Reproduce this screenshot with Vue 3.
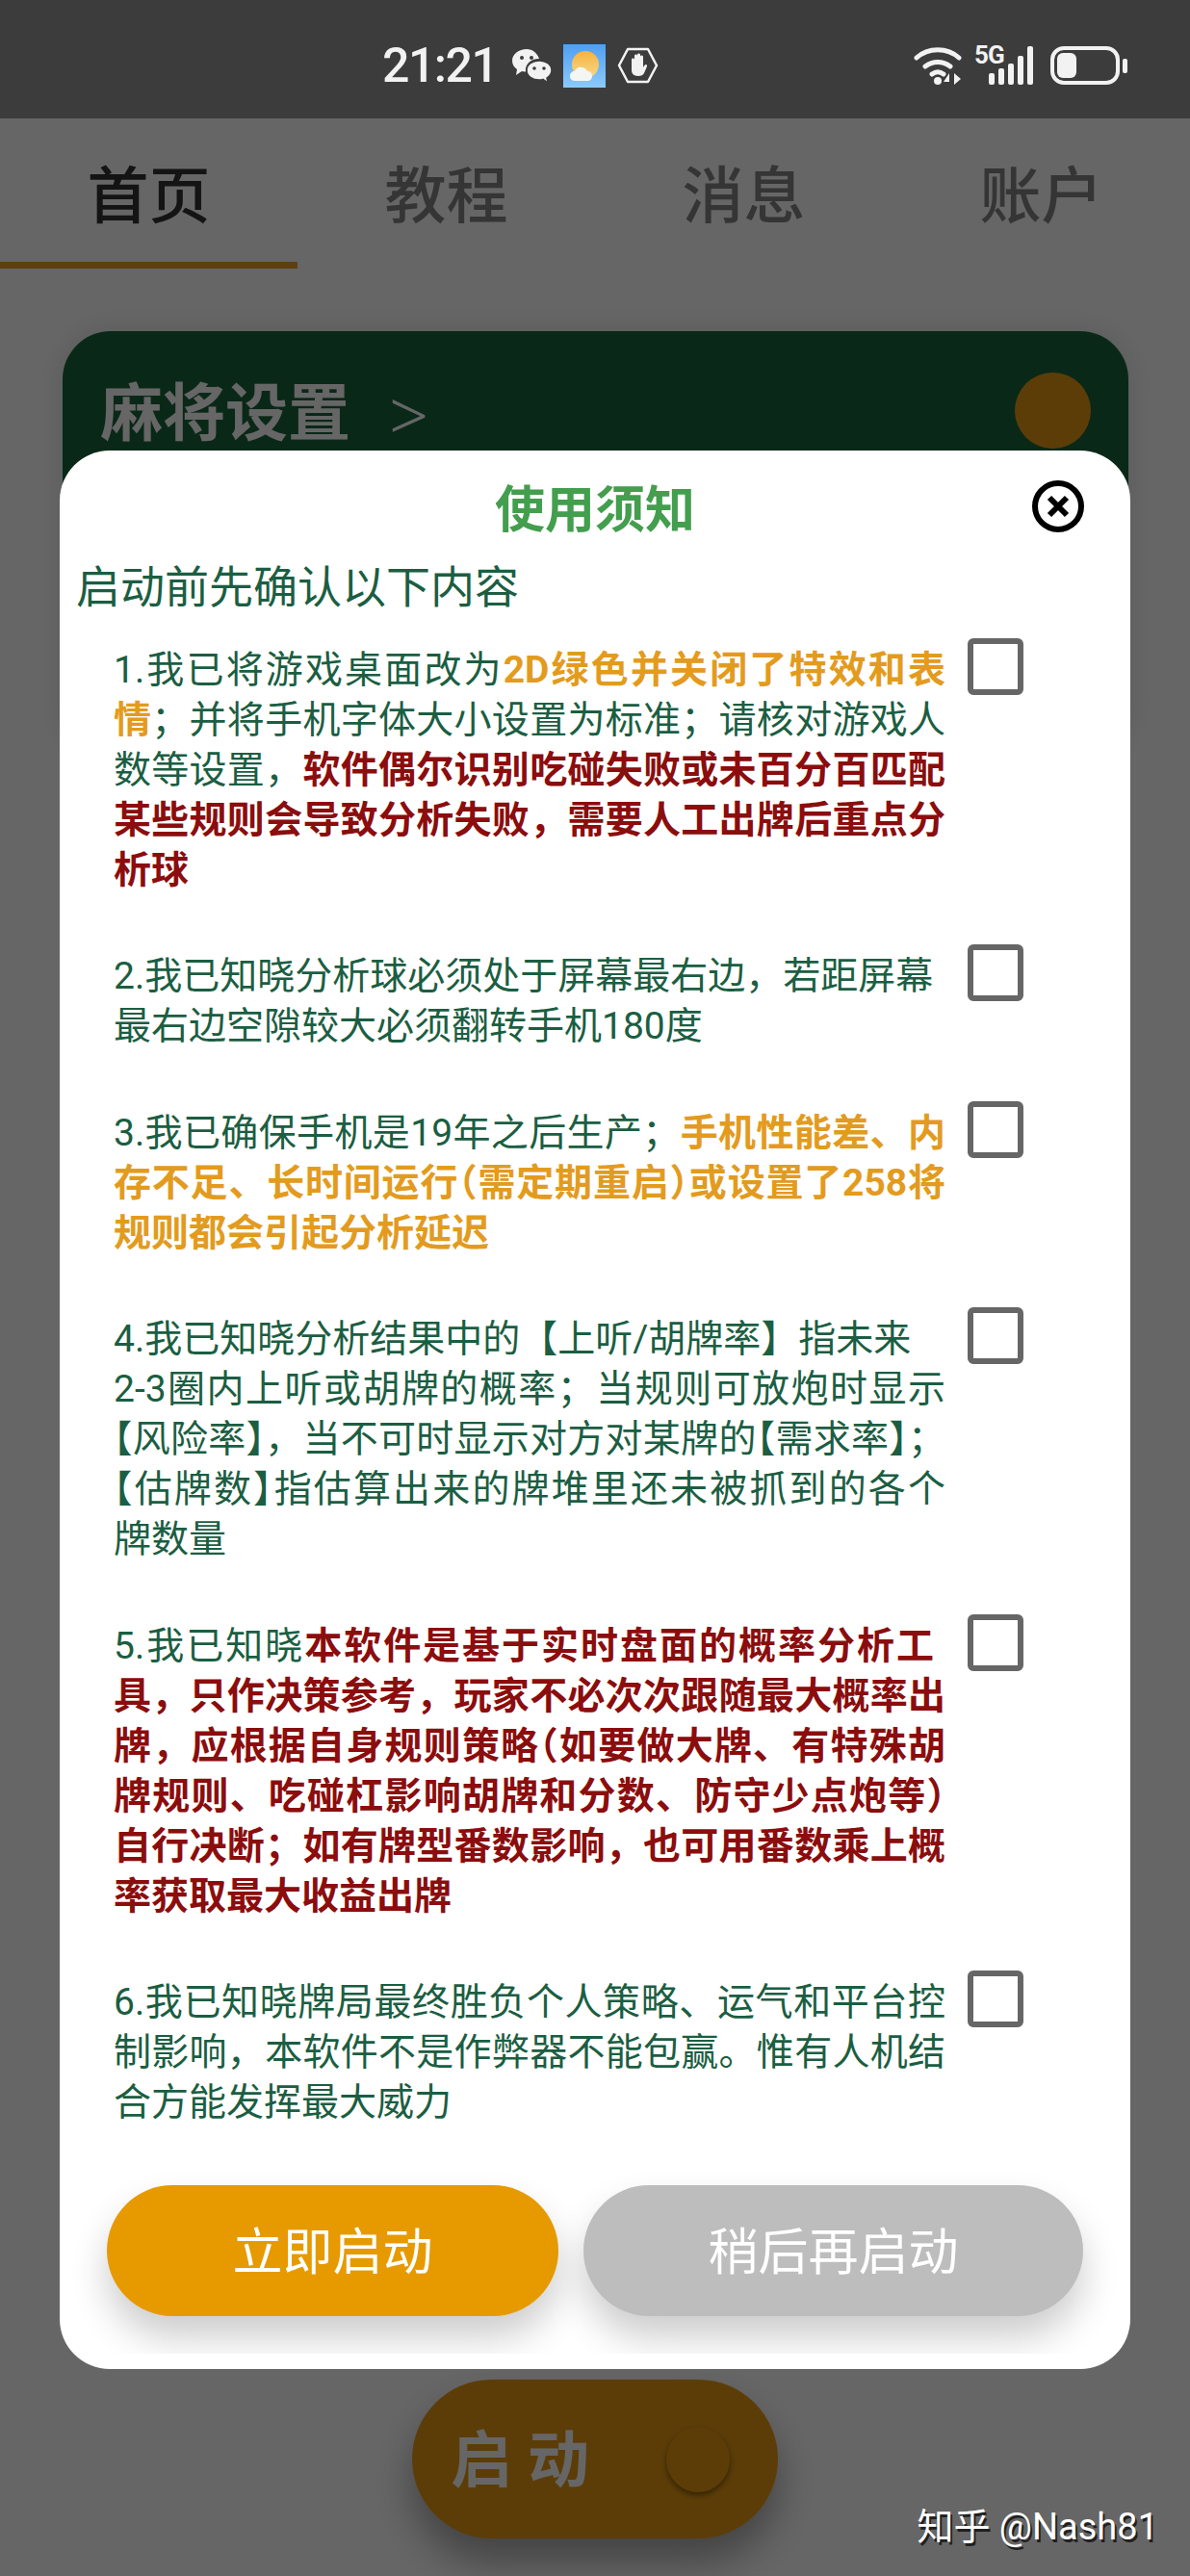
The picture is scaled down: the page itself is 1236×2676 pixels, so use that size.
<template>
  <div class="page">
    <header class="status">
      <span class="clock">21:21</span>
      <svg class="ic-wechat" viewBox="0 0 41 35" width="41" height="35">
        <path d="M15 0C7 0 0 5 0 12c0 4 2 7 5 9l-1 6 6-4c1 .3 3 .5 4 .4C13 16 19 10 28 10 26 4 21 0 15 0z" fill="#f2f2f2"/>
        <circle cx="10" cy="9" r="2" fill="#3c3c3c"/>
        <circle cx="20" cy="9" r="2" fill="#3c3c3c"/>
        <path d="M28 12c-7 0-13 4-13 10s6 10 13 10c1.500 0 3-.2 4-.6l5 3.600-1-5c3-2 5-5 5-8 0-6-6-10-13-10z" fill="#f2f2f2" stroke="#3c3c3c" stroke-width="1.500"/>
        <circle cx="23" cy="20" r="1.800" fill="#3c3c3c"/>
        <circle cx="33" cy="20" r="1.800" fill="#3c3c3c"/>
      </svg>
      <svg class="ic-weather" viewBox="0 0 44 45" width="44" height="45">
        <defs>
          <linearGradient id="sky" x1="0" y1="0" x2="0" y2="1">
            <stop offset="0" stop-color="#4f9ff2"/>
            <stop offset="1" stop-color="#8ccafc"/>
          </linearGradient>
          <linearGradient id="sun" x1="0" y1="0" x2="0" y2="1">
            <stop offset="0" stop-color="#f6b33f"/>
            <stop offset="1" stop-color="#f7d98a"/>
          </linearGradient>
        </defs>
        <rect width="44" height="45" fill="url(#sky)"/>
        <circle cx="23" cy="21" r="14" fill="url(#sun)"/>
        <path d="M13 38c-4 0-6-2-6-5s2-5 5-5c1-3 4-5 7-4 3 0 5 2 6 4 3 0 5 2 5 5s-2 5-5 5z" fill="#f4f6f4"/>
      </svg>
      <svg class="ic-hand" viewBox="0 0 43 38" width="43" height="38">
        <path d="M11 2h21l9 17-9 17H11L2 19z" fill="none" stroke="#f2f2f2" stroke-width="2.500" stroke-linejoin="round"/>
        <path d="M15 20v-7c0-2 3-2 3 0V9c0-2 3-2 3 0V8c0-2 3-2 3 0v2c0-2 3-2 3 0v11c1-2 2-3 3-3s1 1 1 2l-3 7c-1 2-3 3-6 3-5 0-7-3-7-6z" fill="#f2f2f2"/>
      </svg>

      <div class="status-right">
        <svg class="ic-wifi" viewBox="0 0 53 40" width="53" height="40">
          <g fill="none" stroke="#f2f2f2" stroke-width="5" stroke-linecap="round">
            <path d="M3 12C15 1 35 1 47 12"/>
            <path d="M12 21c8-6 18-6 26 0"/>
            <path d="M19 29c4-3 8-3 12 0"/>
          </g>
          <circle cx="25" cy="36" r="4" fill="#f2f2f2"/>
          <path d="M37 40V28l-6 9h6zM42 28v12l7-6z" fill="#f2f2f2"/>
        </svg>
        <div class="signal">
          <span class="five-g">5G</span>
          <i class="bar b1"></i>
          <i class="bar b2"></i>
          <i class="bar b3"></i>
          <i class="bar b4"></i>
          <i class="bar b5"></i>
        </div>
        <div class="battery"><i class="battery-fill"></i></div>
        <i class="battery-nub"></i>
      </div>
    </header>

    <nav class="tabs">
      <div v-for="(tab, i) in tabs" :key="tab" class="tab" :class="{ active: i === 0 }">{{ tab }}</div>
    </nav>

    <main class="home">
      <section class="card">
        <span class="card-title">麻将设置</span>
        <span class="card-arrow">&gt;</span>
        <i class="card-dot"></i>
      </section>
      <div class="start">
        <span class="start-text">启 动</span>
        <i class="start-knob"></i>
      </div>
    </main>

    <div class="overlay">
      <div class="dialog">
        <div class="dialog-head">
          <h2 class="dialog-title">使用须知</h2>
          <svg class="close" viewBox="0 0 54 54" width="54" height="54">
            <circle cx="27" cy="27" r="24" fill="#fff" stroke="#000" stroke-width="6"/>
            <path d="M18 18l18 18M36 18L18 36" stroke="#000" stroke-width="6"/>
          </svg>
        </div>
        <p class="dialog-sub">启动前先确认以下内容</p>

        <ul class="rules">
          <li v-for="(rule, r) in rules" :key="r" class="rule">
            <div class="rule-text">
              <p v-for="(line, l) in rule" :key="l" class="line" :class="{ full: line.full }">
                <span v-for="(part, p) in line.parts" :key="p" :class="[part.tone, { pun: part.pun }]">{{ part.text }}</span>
              </p>
            </div>
            <i class="check"></i>
          </li>
        </ul>

        <div class="actions">
          <button class="btn btn-now">立即启动</button>
          <button class="btn btn-later">稍后再启动</button>
        </div>
      </div>
    </div>

    <span class="watermark">知乎 @Nash81</span>
  </div>
</template>

<script setup>
const tabs = ['首页', '教程', '消息', '账户']

// brackets are set half width on the lines that run the full measure
function makeLine(full, segments) {
  const parts = []
  for (const [text, tone] of segments) {
    if (!full) {
      parts.push({ text, tone })
      continue
    }
    for (const piece of text.split(/([【】（）])/)) {
      if (piece) parts.push({ text: piece, tone, pun: /[【】（）]/.test(piece) })
    }
  }
  return { full, parts }
}

const full = (...segments) => makeLine(true, segments)
const short = (...segments) => makeLine(false, segments)

const rules = [
  [
    full(['1.我已将游戏桌面改为'], ['2D绿色并关闭了特效和表', 'warn']),
    full(['情', 'warn'], ['；并将手机字体大小设置为标准；请核对游戏人']),
    full(['数等设置，'], ['软件偶尔识别吃碰失败或未百分百匹配', 'danger']),
    full(['某些规则会导致分析失败，需要人工出牌后重点分', 'danger']),
    short(['析球', 'danger']),
  ],
  [
    short(['2.我已知晓分析球必须处于屏幕最右边，若距屏幕']),
    short(['最右边空隙较大必须翻转手机180度']),
  ],
  [
    full(['3.我已确保手机是19年之后生产；'], ['手机性能差、内', 'warn']),
    full(['存不足、长时间运行（需定期重启）或设置了258将', 'warn']),
    short(['规则都会引起分析延迟', 'warn']),
  ],
  [
    short(['4.我已知晓分析结果中的【上听/胡牌率】指未来']),
    full(['2-3圈内上听或胡牌的概率；当规则可放炮时显示']),
    full(['【风险率】，当不可时显示对方对某牌的【需求率】；']),
    full(['【估牌数】指估算出来的牌堆里还未被抓到的各个']),
    short(['牌数量']),
  ],
  [
    full(['5.我已知晓'], ['本软件是基于实时盘面的概率分析工', 'danger']),
    full(['具，只作决策参考，玩家不必次次跟随最大概率出', 'danger']),
    full(['牌，应根据自身规则策略（如要做大牌、有特殊胡', 'danger']),
    full(['牌规则、吃碰杠影响胡牌和分数、防守少点炮等）', 'danger']),
    full(['自行决断；如有牌型番数影响，也可用番数乘上概', 'danger']),
    short(['率获取最大收益出牌', 'danger']),
  ],
  [
    full(['6.我已知晓牌局最终胜负个人策略、运气和平台控']),
    full(['制影响，本软件不是作弊器不能包赢。惟有人机结']),
    short(['合方能发挥最大威力']),
  ],
]
</script>

<style>
html, body {
  margin: 0;
  background: #fff;
}
</style>

<style scoped>
.page {
  position: relative;
  width: 1236px;
  height: 2676px;
  overflow: hidden;
  display: flex;
  flex-direction: column;
  background: #fff;
  font-family: Roboto, "Noto Sans CJK SC", sans-serif;
}

.status {
  position: relative;
  z-index: 3;
  flex: none;
  height: 123px;
  box-sizing: border-box;
  padding: 13px 65px 0 397px;
  display: flex;
  align-items: center;
  background: #3c3c3c;
  color: #f2f2f2;
}

.clock {
  font-size: 50px;
  font-weight: 500;
  width: 135px;
  letter-spacing: -1.500px;
}

.ic-weather {
  margin-left: 12px;
}

.ic-hand {
  margin-left: 12px;
}

.status-right {
  margin-left: auto;
  display: flex;
  align-items: center;
  height: 40px;
}

.signal {
  position: relative;
  display: flex;
  align-items: flex-end;
  gap: 4px;
  width: 62px;
  height: 40px;
  margin-left: 10px;
  margin-right: 17px;
  padding-left: 15px;
  box-sizing: border-box;
}

.five-g {
  position: absolute;
  left: 0;
  top: -6px;
  font-size: 26px;
  font-weight: 700;
  letter-spacing: -1px;
}

.bar {
  width: 6px;
  border-radius: 2px;
  background: #f2f2f2;
}

.b1 { height: 12px; }
.b2 { height: 17px; }
.b3 { height: 22px; }
.b4 { height: 30px; }
.b5 { height: 40px; }

.battery {
  width: 72px;
  height: 40px;
  box-sizing: border-box;
  border: 4px solid #f2f2f2;
  border-radius: 14px;
  padding: 3px;
}

.battery-fill {
  display: block;
  width: 20px;
  height: 100%;
  border-radius: 6px;
  background: #f2f2f2;
}

.battery-nub {
  width: 5px;
  height: 15px;
  margin-left: 3px;
  border-radius: 2px;
  background: #f2f2f2;
}

.tabs {
  flex: none;
  height: 156px;
  display: grid;
  grid-template-columns: repeat(4, 309px);
}

.tab {
  display: flex;
  align-items: center;
  justify-content: center;
  padding-bottom: 6px;
  box-sizing: border-box;
  font-size: 64px;
  font-weight: 500;
  color: #858585;
}

.tab.active {
  color: #333;
  border-bottom: 7px solid #ed9f28;
  padding-bottom: 0;
}

.home {
  flex: 1;
  display: flex;
  flex-direction: column;
  align-items: center;
  padding-top: 65px;
  padding-bottom: 39px;
}

.card {
  width: 1107px;
  height: 440px;
  margin-left: 1px;
  box-sizing: border-box;
  padding: 43px 39px 0;
  display: flex;
  align-items: flex-start;
  border-radius: 50px;
  background: #1a643c;
  color: #fff;
  box-shadow: 0 0 30px rgba(0, 0, 0, 0.12);
}

.card-title {
  font-size: 65px;
  font-weight: 700;
  line-height: 86px;
}

.card-arrow {
  margin-left: 40px;
  font-size: 72px;
  font-weight: 300;
  line-height: 86px;
  font-family: "Noto Sans", sans-serif;
}

.card-dot {
  margin-left: auto;
  width: 79px;
  height: 79px;
  border-radius: 50%;
  background: #e69a14;
}

.start {
  margin-top: auto;
  width: 380px;
  height: 165px;
  box-sizing: border-box;
  padding: 0 50px 0 40px;
  display: flex;
  align-items: center;
  justify-content: space-between;
  border-radius: 83px;
  background: #e69a14;
  color: #fff;
  box-shadow: 0 24px 40px rgba(0, 0, 0, 0.35);
}

.start-text {
  padding-top: 4px;
  font-size: 64px;
  font-weight: 700;
  white-space: pre;
  line-height: 1;
}

.start-knob {
  width: 66px;
  height: 68px;
  border-radius: 50%;
  background: #e69a14;
  box-shadow: 0 3px 6px rgba(0, 0, 0, 0.45);
}

.overlay {
  position: absolute;
  z-index: 2;
  inset: 123px 0 0;
  background: rgba(0, 0, 0, 0.6);
}

.dialog {
  box-sizing: border-box;
  width: 1112px;
  height: 1993px;
  margin: 345px 0 0 62px;
  padding-bottom: 16px;
  display: flex;
  flex-direction: column;
  border-radius: 52px;
  background: #fff;
}

.dialog-head {
  flex: none;
  height: 120px;
  padding-bottom: 6px;
  box-sizing: border-box;
  display: grid;
  grid-template-columns: 1fr auto 1fr;
  align-items: center;
}

.dialog-title {
  grid-column: 2;
  margin: 0;
  font-size: 52px;
  font-weight: 700;
  color: #439e4e;
}

.close {
  justify-self: end;
  margin-right: 48px;
  margin-top: 2px;
}

.dialog-sub {
  margin: 0;
  padding-left: 17px;
  font-size: 46px;
  line-height: 44px;
  color: #1b5e42;
}

.rules {
  list-style: none;
  margin: 31px 0 0;
  padding: 0 0 0 56px;
  display: flex;
  flex-direction: column;
  gap: 51.400px;
}

.rule {
  display: flex;
  align-items: flex-start;
}

.rule-text {
  width: 864px;
  padding-top: 7px;
  font-size: 39px;
  line-height: 52px;
  color: #1b5e42;
}

.line {
  margin: 0;
  white-space: nowrap;
}

.line.full {
  white-space: normal;
  text-align: justify;
  text-align-last: justify;
}

.rule:nth-child(5) .line:first-child {
  width: 852px;
}

.pun {
  font-feature-settings: "halt";
}

.warn {
  font-weight: 700;
  color: #e39b1e;
}

.danger {
  font-weight: 700;
  color: #8b0d0d;
}

.check {
  flex: none;
  width: 58px;
  height: 59px;
  box-sizing: border-box;
  margin-left: 23px;
  border: 6px solid #666;
  border-radius: 6px;
}

.actions {
  margin-top: auto;
  height: 205px;
  box-sizing: border-box;
  padding: 30px 0 0 49px;
  display: flex;
  align-items: flex-start;
  gap: 26px;
  overflow: hidden;
}

.btn {
  height: 136px;
  padding: 0 0 5px;
  border: 0;
  border-radius: 68px;
  font-family: inherit;
  font-size: 52px;
  color: #fff;
  box-shadow: 0 22px 38px rgba(0, 0, 0, 0.2);
}

.btn-now {
  width: 469px;
  background: #e69a00;
}

.btn-later {
  width: 519px;
  background: #bdbdbd;
}

.watermark {
  position: absolute;
  z-index: 3;
  right: 33px;
  bottom: 31px;
  font-size: 38px;
  line-height: 40px;
  color: #fff;
  text-shadow: 2px 3px 0 rgba(0, 0, 0, 0.7);
}
</style>
